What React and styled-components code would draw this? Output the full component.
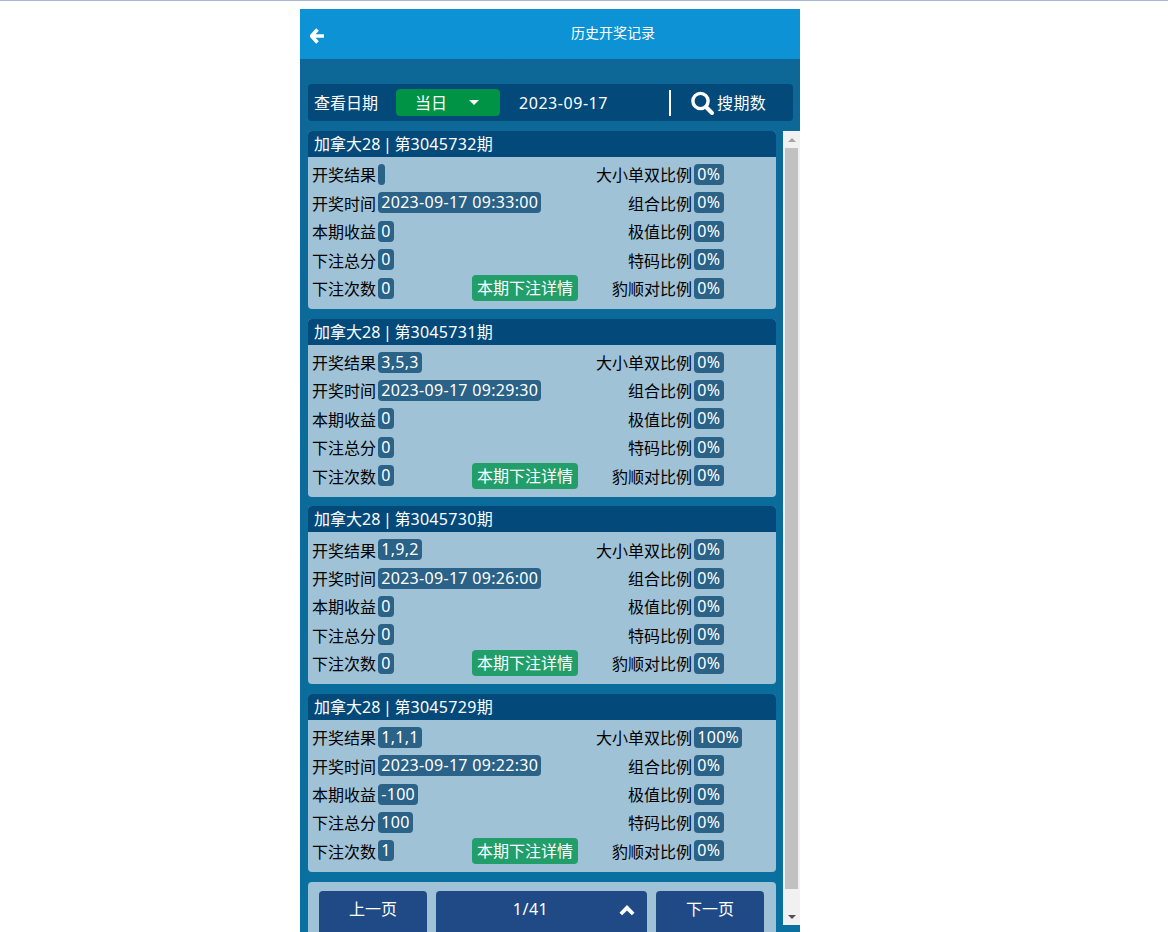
import React from "react";
import styled, { createGlobalStyle } from "styled-components";

const Global = createGlobalStyle`
  html, body { margin: 0; padding: 0; background: #fff; height: 100%; overflow: hidden; }
  body { font-family: "Noto Sans", "Noto Sans CJK SC", sans-serif; font-size: 16px; }
`;

const TopLine = styled.div`height: 1px; background: #a9b8d2;`;
const Phone = styled.div`
  width: 500px; height: 923px; margin: 8px 0 0 300px; display: flex; flex-direction: column;
  background: linear-gradient(180deg, #0d6797, #09709f); overflow: hidden;
`;
const Header = styled.header`
  height: 50px; flex: none; display: flex; align-items: flex-start; background: #0e92d6; color: #fff;
`;
const Back = styled.svg`width: 15px; height: 16px; margin: 19px 0 0 10px; flex: none;`;
const Title = styled.h1`margin: 14px 0 0 246px; font-size: 14px; font-weight: 400; line-height: 20px;`;

const SearchBar = styled.div`
  flex: none; height: 37px; margin: 25px 7px 10px 8px; padding-left: 6px; display: flex; align-items: center;
  background: #03497a; border-radius: 4px; color: #fff; line-height: 22px;
`;
const DateLabel = styled.span`width: 82px;`;
const Select = styled.div`
  width: 104px; height: 27px; display: flex; align-items: center; background: #009245; border-radius: 4px; padding-left: 19px; box-sizing: border-box;
`;
const Caret = styled.i`
  margin-left: 22px; width: 0; height: 0; border: 5px solid transparent; border-top: 5px solid #fff; border-bottom: 0;
`;
const DateValue = styled.span`margin-left: 19px; width: 150px; letter-spacing: 0.55px;`;
const Divider = styled.i`width: 2px; height: 26px; background: #fff;`;
const SearchBtn = styled.div`margin-left: 20px; display: flex; align-items: center; gap: 3px; letter-spacing: 0.4px;`;
const SearchIcon = styled.svg`width: 23px; height: 24px; flex: none;`;

const ListArea = styled.div`flex: 1; display: flex; min-height: 0; padding-left: 8px;`;
const List = styled.div`width: 468px; flex: none; margin-right: 7px;`;
const Card = styled.section`margin-bottom: 9.67px; border-radius: 4px; overflow: hidden; background: #9fc2d7;`;
const CardHead = styled.div`height: 26px; line-height: 26px; padding-left: 6px; background: #03497a; color: #fff; word-spacing: -1.5px;`;
const Digits = styled.span`letter-spacing: 0.3px;`;
const CardBody = styled.div`padding: 3.3px 0 6.7px 4px;`;
const Row = styled.div`height: 28.4px; display: flex; align-items: center; color: #000;`;
const Left = styled.div`width: 266px; display: flex; align-items: center; justify-content: space-between;`;
const Pair = styled.div`display: flex; align-items: center; gap: 2px;`;
const Right = styled(Pair)`margin-left: 14px;`;
const RightLabel = styled.span`width: 100px; text-align: right; white-space: nowrap;`;
const Badge = styled.span`
  display: inline-block; height: 21px; line-height: 21px; padding: 0 3.25px; background: #2a6288; color: #fff; border-radius: 4px; white-space: nowrap; letter-spacing: 0.3px;
`;
const Detail = styled.button`
  height: 26px; padding: 0 5px; border: 0; border-radius: 4px; background: #229e6a; color: #fff; font: inherit; line-height: 26px;
`;
const Pager = styled.div`
  height: 60px; margin-top: 10px; padding: 9px 12px 0 11px; box-sizing: border-box; display: flex; gap: 9px; background: #9fc2d7; border-radius: 4px;
`;
const PageBtn = styled.div`
  width: ${p => p.$w}px; height: 44px; padding-top: 7px; box-sizing: border-box; display: flex; justify-content: center; color: #fff; background: #1f4a85; border-radius: 4px 4px 0 0; line-height: 22px;
`;
const PageMid = styled(PageBtn)`position: relative; padding-right: 22px; letter-spacing: 0.5px;`;
const PageChevron = styled.svg`position: absolute; left: 183px; top: 14px; width: 16px; height: 11px;`;

const Scrollbar = styled.div`width: 17px; height: 794px; flex: none; display: flex; flex-direction: column; background: #f1f1f1;`;
const ScrollBtn = styled.div`height: 17px; flex: none; display: flex; align-items: center; justify-content: center;`;
const Arrow = styled.i`
  width: 0; height: 0; border-left: 4px solid transparent; border-right: 4px solid transparent;
  ${p => p.$up ? "border-bottom: 4px solid #a3a3a3;" : "border-top: 4px solid #505050;"}
`;
const ScrollTrack = styled.div`flex: 1; padding-left: 2px;`;
const Thumb = styled.div`width: 13px; height: 741px; background: #c1c1c1;`;

const records = [
  { id: "3045732", result: "", time: "2023-09-17 09:33:00", gain: "0", total: "0", times: "0", size: "0%" },
  { id: "3045731", result: "3,5,3", time: "2023-09-17 09:29:30", gain: "0", total: "0", times: "0", size: "0%" },
  { id: "3045730", result: "1,9,2", time: "2023-09-17 09:26:00", gain: "0", total: "0", times: "0", size: "0%" },
  { id: "3045729", result: "1,1,1", time: "2023-09-17 09:22:30", gain: "-100", total: "100", times: "1", size: "100%" },
];

const Record = ({ r }) => (
  <Card>
    <CardHead>加拿大28 | 第<Digits>{r.id}</Digits>期</CardHead>
    <CardBody>
      <Row>
        <Left><Pair>开奖结果<Badge>{r.result}</Badge></Pair></Left>
        <Right><RightLabel>大小单双比例</RightLabel><Badge>{r.size}</Badge></Right>
      </Row>
      <Row>
        <Left><Pair>开奖时间<Badge>{r.time}</Badge></Pair></Left>
        <Right><RightLabel>组合比例</RightLabel><Badge>0%</Badge></Right>
      </Row>
      <Row>
        <Left><Pair>本期收益<Badge>{r.gain}</Badge></Pair></Left>
        <Right><RightLabel>极值比例</RightLabel><Badge>0%</Badge></Right>
      </Row>
      <Row>
        <Left><Pair>下注总分<Badge>{r.total}</Badge></Pair></Left>
        <Right><RightLabel>特码比例</RightLabel><Badge>0%</Badge></Right>
      </Row>
      <Row>
        <Left><Pair>下注次数<Badge>{r.times}</Badge></Pair><Detail>本期下注详情</Detail></Left>
        <Right><RightLabel>豹顺对比例</RightLabel><Badge>0%</Badge></Right>
      </Row>
    </CardBody>
  </Card>
);

export default function App() {
  return (
    <>
      <Global />
      <TopLine />
      <Phone>
        <Header>
          <Back viewBox="0 0 15 16">
            <path d="M7.5 1.5 L1.5 8 L7.5 14.5 M2.5 8 H14" fill="none" stroke="#fff" strokeWidth="3.6" />
          </Back>
          <Title>历史开奖记录</Title>
        </Header>
        <SearchBar>
          <DateLabel>查看日期</DateLabel>
          <Select>当日<Caret /></Select>
          <DateValue>2023-09-17</DateValue>
          <Divider />
          <SearchBtn>
            <SearchIcon viewBox="0 0 23 24">
              <circle cx="9.5" cy="10" r="7.6" fill="none" stroke="#fff" strokeWidth="3.4" />
              <path d="M15 16 L21 22" stroke="#fff" strokeWidth="4" strokeLinecap="round" />
            </SearchIcon>
            搜期数
          </SearchBtn>
        </SearchBar>
        <ListArea>
          <List>
            {records.map(r => <Record key={r.id} r={r} />)}
            <Pager>
              <PageBtn $w={108}>上一页</PageBtn>
              <PageMid $w={211}>1/41
                <PageChevron viewBox="0 0 16 11">
                  <path d="M1.8 9 L8 2.8 L14.2 9" fill="none" stroke="#fff" strokeWidth="3.8" />
                </PageChevron>
              </PageMid>
              <PageBtn $w={108}>下一页</PageBtn>
            </Pager>
          </List>
          <Scrollbar>
            <ScrollBtn><Arrow $up /></ScrollBtn>
            <ScrollTrack><Thumb /></ScrollTrack>
            <ScrollBtn><Arrow /></ScrollBtn>
          </Scrollbar>
        </ListArea>
      </Phone>
    </>
  );
}
